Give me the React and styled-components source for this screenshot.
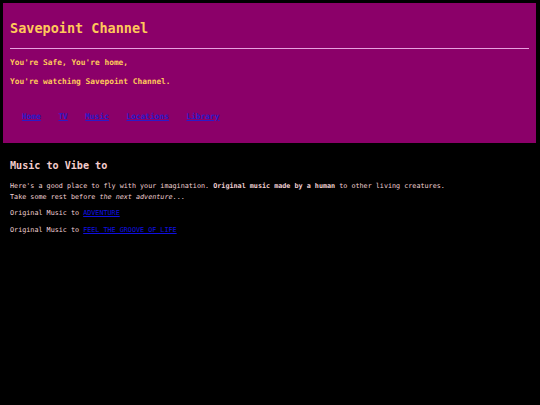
import React from "react";
import styled, { createGlobalStyle } from "styled-components";

const Global = createGlobalStyle`
  html, body { margin: 0; padding: 0; background: #000; }
  body { font-family: "DejaVu Sans Mono", "Liberation Mono", monospace; }
`;

const Header = styled.header`
  margin: 3px 4px 0 3px;
  height: 140px;
  box-sizing: border-box;
  padding: 17px 7px 0 7px;
  background: #8b0069;
  color: #ffc85a;
`;

const Title = styled.h1`
  margin: 0;
  font-size: 13.5px;
  line-height: 16px;
  font-weight: bold;
  color: #ffc85a;
`;

const Rule = styled.hr`
  margin: 12px 0 0 0;
  border: 0;
  height: 1px;
  background: #e8a0e0;
`;

const Tagline = styled.p`
  margin: ${(p) => p.$top}px 0 0 0;
  font-size: 7.85px;
  line-height: 10px;
  font-weight: bold;
  color: #ffc85a;
`;

const Nav = styled.nav`
  margin: 25px 0 0 12px;
  display: flex;
  gap: 17.5px;
  font-size: 7.85px;
  line-height: 10px;
  font-weight: bold;
`;

const NavLink = styled.a`
  color: #2a1cc8;
  text-decoration: underline;
`;

const Main = styled.main`
  padding: 0 10px;
  color: #f0d0d4;
`;

const Heading = styled.h2`
  margin: 17px 0 0 0;
  font-size: 10.1px;
  line-height: 12px;
  font-weight: bold;
  color: #f4cccc;
`;

const Para = styled.p`
  margin: ${(p) => p.$top}px 0 0 0;
  font-size: 6.75px;
  line-height: 11px;
`;

const TextLink = styled.a`
  color: #1010e0;
  text-decoration: underline;
`;

export default function App() {
  const links = ["Home", "TV", "Music", "Locations", "Library"];
  return (
    <>
      <Global />
      <Header>
        <Title>Savepoint Channel</Title>
        <Rule />
        <Tagline $top={9}>You're Safe, You're home,</Tagline>
        <Tagline $top={9}>You're watching Savepoint Channel.</Tagline>
        <Nav>
          {links.map((l) => (
            <NavLink key={l} href="#">
              {l}
            </NavLink>
          ))}
        </Nav>
      </Header>
      <Main>
        <Heading>Music to Vibe to</Heading>
        <Para $top={9}>
          Here's a good place to fly with your imagination.{" "}
          <b>Original music made by a human</b> to other living creatures.
          <br />
          Take some rest before <i>the next adventure</i>...
        </Para>
        <Para $top={5}>
          Original Music to <TextLink href="#">ADVENTURE</TextLink>
        </Para>
        <Para $top={6}>
          Original Music to <TextLink href="#">FEEL THE GROOVE OF LIFE</TextLink>
        </Para>
      </Main>
    </>
  );
}
